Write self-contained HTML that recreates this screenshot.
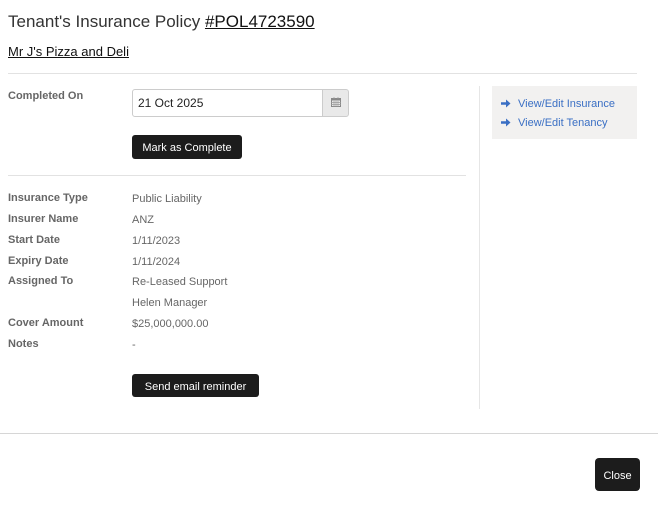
<!DOCTYPE html>
<html><head><style>
body{margin:0;width:658px;height:508px;background:#fff;font-family:"Liberation Sans",sans-serif;position:relative;overflow:hidden}
.a{position:absolute}
.lbl{position:absolute;left:8px;font-size:11px;font-weight:bold;color:#666}
.val{position:absolute;left:132px;font-size:11px;color:#666}
.btn{position:absolute;background:#1c1c1c;color:#fff;font-size:11px;border-radius:3px;display:flex;align-items:center;justify-content:center;padding-top:2px;box-sizing:border-box}
.lnk{position:absolute;font-size:11px;color:#3a6fc4}
</style></head><body>
<div class="a" style="left:8px;top:12px;font-size:17px;color:#333">Tenant's Insurance Policy <span style="text-decoration:underline;color:#111">#POL4723590</span></div>
<div class="a" style="left:8px;top:44px;font-size:13px;color:#111;text-decoration:underline">Mr J's Pizza and Deli</div>
<div class="a" style="left:8px;top:73px;width:629px;height:1px;background:#e2e2e2"></div>
<div class="lbl" style="top:90px">Completed On</div>
<div class="a" style="left:132px;top:89px;width:216px;height:28px;border:1px solid #ccc;border-radius:3px;box-sizing:border-box"></div>
<div class="a" style="left:138px;top:96px;font-size:12px;color:#222">21 Oct 2025</div>
<div class="a" style="left:322px;top:89px;width:27px;height:28px;background:#e9e9e9;border:1px solid #ccc;border-radius:0 3px 3px 0;box-sizing:border-box"></div>
<svg class="a" style="left:331px;top:97px" width="10" height="10" viewBox="0 0 10 10"><rect x="0.5" y="1.5" width="9" height="8" fill="none" stroke="#888"/><rect x="0.5" y="1.5" width="9" height="2" fill="#888"/><path d="M3 0v2M7 0v2M0 5.5h10M0 7.5h10M3 4v6M5 4v6M7 4v6" stroke="#999" stroke-width="0.7"/></svg>
<div class="btn" style="left:132px;top:135px;width:110px;height:24px">Mark as Complete</div>
<div class="a" style="left:8px;top:175px;width:458px;height:1px;background:#e2e2e2"></div>
<div class="lbl" style="top:192px">Insurance Type</div><div class="val" style="top:193px">Public Liability</div>
<div class="lbl" style="top:213px">Insurer Name</div><div class="val" style="top:214px">ANZ</div>
<div class="lbl" style="top:234px">Start Date</div><div class="val" style="top:235px">1/11/2023</div>
<div class="lbl" style="top:255px">Expiry Date</div><div class="val" style="top:256px">1/11/2024</div>
<div class="lbl" style="top:275px">Assigned To</div><div class="val" style="top:276px">Re-Leased Support</div>
<div class="val" style="top:297px">Helen Manager</div>
<div class="lbl" style="top:317px">Cover Amount</div><div class="val" style="top:318px">$25,000,000.00</div>
<div class="lbl" style="top:338px">Notes</div><div class="val" style="top:339px">-</div>
<div class="btn" style="left:132px;top:374px;width:127px;height:23px">Send email reminder</div>
<div class="a" style="left:479px;top:86px;width:1px;height:323px;background:#e6e6e6"></div>
<div class="a" style="left:492px;top:86px;width:145px;height:53px;background:#f2f1f0"></div>
<svg class="a" style="left:501px;top:99px" width="10" height="9" viewBox="0 0 10 9"><path d="M0 3.2h5V0.5L9.5 4.5 5 8.5V5.8H0z" fill="#3a6fc4"/></svg>
<svg class="a" style="left:501px;top:118px" width="10" height="9" viewBox="0 0 10 9"><path d="M0 3.2h5V0.5L9.5 4.5 5 8.5V5.8H0z" fill="#3a6fc4"/></svg>
<div class="lnk" style="left:518px;top:98px">View/Edit Insurance</div>
<div class="lnk" style="left:518px;top:117px">View/Edit Tenancy</div>
<div class="a" style="left:0;top:433px;width:658px;height:1px;background:#d6d6d6"></div>
<div class="btn" style="left:595px;top:458px;width:45px;height:33px;border-radius:4px">Close</div>
</body></html>
